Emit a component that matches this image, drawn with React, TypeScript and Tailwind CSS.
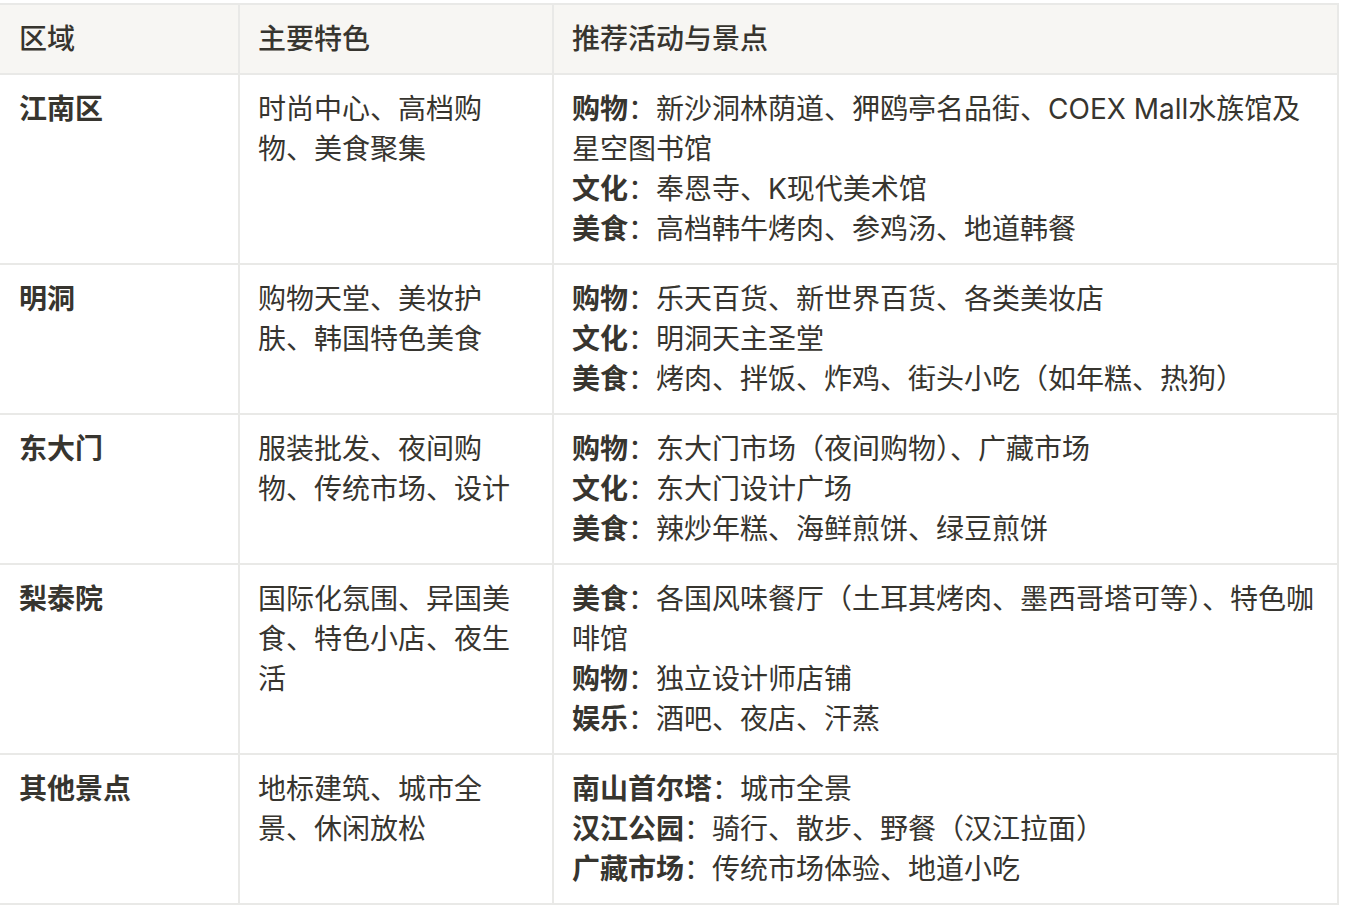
import React from 'react';

type Line = { label?: string; text: string };

type Row = {
  area: string;
  features: string;
  lines: Line[];
};

const ROWS: Row[] = [
  {
    area: '江南区',
    features: '时尚中心、高档购物、美食聚集',
    lines: [
      { label: '购物', text: '新沙洞林荫道、狎鸥亭名品街、COEX Mall水族馆及星空图书馆' },
      { label: '文化', text: '奉恩寺、K现代美术馆' },
      { label: '美食', text: '高档韩牛烤肉、参鸡汤、地道韩餐' },
    ],
  },
  {
    area: '明洞',
    features: '购物天堂、美妆护肤、韩国特色美食',
    lines: [
      { label: '购物', text: '乐天百货、新世界百货、各类美妆店' },
      { label: '文化', text: '明洞天主圣堂' },
      { label: '美食', text: '烤肉、拌饭、炸鸡、街头小吃（如年糕、热狗）' },
    ],
  },
  {
    area: '东大门',
    features: '服装批发、夜间购物、传统市场、设计',
    lines: [
      { label: '购物', text: '东大门市场（夜间购物）、广藏市场' },
      { label: '文化', text: '东大门设计广场' },
      { label: '美食', text: '辣炒年糕、海鲜煎饼、绿豆煎饼' },
    ],
  },
  {
    area: '梨泰院',
    features: '国际化氛围、异国美食、特色小店、夜生活',
    lines: [
      { label: '美食', text: '各国风味餐厅（土耳其烤肉、墨西哥塔可等）、特色咖啡馆' },
      { label: '购物', text: '独立设计师店铺' },
      { label: '娱乐', text: '酒吧、夜店、汗蒸' },
    ],
  },
  {
    area: '其他景点',
    features: '地标建筑、城市全景、休闲放松',
    lines: [
      { label: '南山首尔塔', text: '城市全景' },
      { label: '汉江公园', text: '骑行、散步、野餐（汉江拉面）' },
      { label: '广藏市场', text: '传统市场体验、地道小吃' },
    ],
  },
];

const cell = 'border-b-2 border-r-2 border-[#e9e9e7] py-[14px]';

export default function App() {
  return (
    <div
      className="min-h-screen bg-white pt-[3px] text-[28px] leading-[40px] text-[#37352f]"
      style={{ fontFamily: 'Inter, "Noto Sans CJK SC", sans-serif' }}
    >
      <div className="grid w-[1339px] grid-cols-[240px_314px_785px] border-t-2 border-[#e9e9e7]">
        <div className={`${cell} bg-[#f7f6f3] pl-[19px] pr-[18px] font-medium`}>区域</div>
        <div className={`${cell} bg-[#f7f6f3] px-[18px] font-medium`}>主要特色</div>
        <div className={`${cell} bg-[#f7f6f3] px-[18px] font-medium`}>推荐活动与景点</div>

        {ROWS.map((row) => (
          <React.Fragment key={row.area}>
            <div className={`${cell} pl-[19px] pr-[18px] font-bold`}>{row.area}</div>
            <div className={`${cell} px-[18px]`}>{row.features}</div>
            <div className={`${cell} px-[18px]`}>
              {row.lines.map((line) => (
                <div key={line.label}>
                  <span className="font-bold">{line.label}</span>：{line.text}
                </div>
              ))}
            </div>
          </React.Fragment>
        ))}
      </div>
    </div>
  );
}
